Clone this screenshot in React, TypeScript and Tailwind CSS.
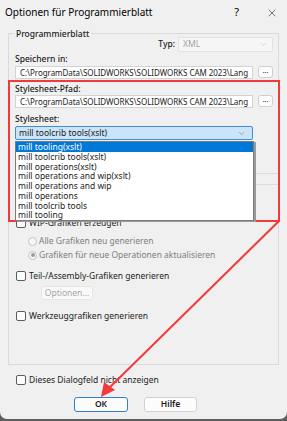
import { ChevronDown, X } from "lucide-react";

const stylesheets = [
	"mill tooling(xslt)",
	"mill toolcrib tools(xslt)",
	"mill operations(xslt)",
	"mill operations and wip(xslt)",
	"mill operations and wip",
	"mill operations",
	"mill toolcrib tools",
	"mill tooling",
];

const path = "C:\\ProgramData\\SOLIDWORKS\\SOLIDWORKS CAM 2023\\Lang";

function CheckRow({ label }: { label: string }) {
	return (
		<div className="flex h-[10px] items-center gap-[3px]">
			<span className="h-[10px] w-[10px] shrink-0 rounded-[2px] border border-[#5c5c5c] bg-[#fbfbfb]" />
			<span className="leading-[10px] text-[#1b1b1b]">{label}</span>
		</div>
	);
}

function RadioRow({ label, checked }: { label: string; checked?: boolean }) {
	return (
		<div className="flex h-[10px] items-center gap-[2px] pl-[12px]">
			<span className="flex h-[9px] w-[9px] shrink-0 items-center justify-center rounded-full border border-[#c4c4c4] bg-[#f7f7f7]">
				{checked && <span className="h-[4px] w-[4px] rounded-full bg-[#9b9b9b]" />}
			</span>
			<span className="leading-[10px] text-[#7d7d7d]">{label}</span>
		</div>
	);
}

function PathRow() {
	return (
		<div className="flex items-start gap-[5px]">
			<div className="flex h-[13px] w-[238px] items-center overflow-hidden whitespace-nowrap border border-[#d3d3d3] bg-white pl-[4px] text-[8px] leading-[10px] tracking-[-0.05px] text-[#1b1b1b]">
				{path}
			</div>
			<button className="flex h-[12px] w-[15px] items-center justify-center overflow-hidden rounded-[3px] border border-[#d0d0d0] bg-[#fdfdfd] pb-[3px] text-[7px] leading-[7px] text-[#1b1b1b]">
				...
			</button>
		</div>
	);
}

export default function App() {
	return (
		<div className="h-[421px] w-[287px] bg-[#5e5e5e] font-['Noto_Sans',sans-serif] text-[8.5px]">
			<div className="relative h-[419px] overflow-hidden rounded-b-[7px] bg-[#f0f0f0]">
				<header className="flex h-[25px] items-center justify-between pl-[5px] pr-[9px] text-[10px] text-black">
					<span>Optionen für Programmierblatt</span>
					<div className="flex items-center gap-[27px]">
						<span className="text-[11px]">?</span>
						<X size={12} strokeWidth={1} />
					</div>
				</header>

				<div className="px-[8px]">
					<section className="relative mt-[8px] border border-[#dadada] pb-[43px] pl-[6px] pr-[5px]">
						<span className="absolute -top-[6px] left-[5px] bg-[#f0f0f0] px-[2px] font-medium leading-[11px] text-[#1b1b1b]">
							Programmierblatt
						</span>

						<div className="mt-[3px] flex h-[15px] items-center justify-end gap-[3px]">
							<span className="font-medium text-[#1b1b1b]">Typ:</span>
							<div className="flex h-[15px] w-[95px] items-center justify-between rounded-[2px] border border-[#e2e2e2] bg-[#f6f6f6] pl-[4px] pr-[4px] text-[#a3a3a3]">
								<span>XML</span>
								<ChevronDown size={9} strokeWidth={1.3} className="text-[#b4b4b4]" />
							</div>
						</div>

						<div className="mt-[2px] h-[10px] font-medium leading-[10px] text-[#1b1b1b]">Speichern in:</div>
						<div className="mt-[2px]">
							<PathRow />
						</div>

						<div className="mt-[5px] h-[10px] font-medium leading-[10px] text-[#1b1b1b]">Stylesheet-Pfad:</div>
						<div className="mt-[1px]">
							<PathRow />
						</div>

						<div className="mt-[6px] h-[10px] font-medium leading-[10px] text-[#1b1b1b]">Stylesheet:</div>
						<div className="relative mt-[2px] w-[238px]">
							<div className="flex h-[14px] items-center justify-between rounded-[2px] border border-[#3d8fd8] bg-[#cce4f7] pl-[3px] pr-[6px] text-[#1b1b1b]">
								<span>mill toolcrib tools(xslt)</span>
								<ChevronDown size={9} strokeWidth={1.3} className="text-[#6b6b6b]" />
							</div>
							<ul className="absolute left-0 top-[15px] z-10 w-[239px] border border-[#7c7c7c] bg-white shadow-[2px_1px_0_#9a9a9a]">
								{stylesheets.map((item, i) => (
									<li
										key={item}
										className={`h-[9.75px] pl-[2px] leading-[9.75px] ${
											i === 0 ? "bg-[#0078d7] text-white" : "text-[#1b1b1b]"
										}`}
									>
										{item}
									</li>
								))}
							</ul>
						</div>

						<div className="-mr-[5px] ml-auto mt-[33px] h-[12px] w-[26px] border-y border-[#dcdcdc]" />

						<div className="mt-[33px] pl-[1px]">
							<CheckRow label="WIP-Grafiken erzeugen" />
							<div className="mt-[8px]">
								<RadioRow label="Alle Grafiken neu generieren" />
							</div>
							<div className="mt-[4px]">
								<RadioRow label="Grafiken für neue Operationen aktualisieren" checked />
							</div>
							<div className="mt-[11px]">
								<CheckRow label="Teil-/Assembly-Grafiken generieren" />
							</div>
							<button className="ml-[25px] mt-[5px] flex h-[14px] w-[52px] items-center justify-center rounded-[3px] border border-[#e6e6e6] bg-[#f9f9f9] text-[#a6a6a6]">
								Optionen...
							</button>
							<div className="mt-[11px]">
								<CheckRow label="Werkzeuggrafiken generieren" />
							</div>
						</div>
					</section>

					<div className="mt-[10px] pl-[8px]">
						<CheckRow label="Dieses Dialogfeld nicht anzeigen" />
					</div>

					<div className="mt-[12px] flex gap-[16px] pl-[66px]">
						<button className="h-[15px] w-[54px] rounded-[3px] border border-[#2f7fd0] bg-[#fcfcfc] font-semibold text-[#1b1b1b]">
							OK
						</button>
						<button className="h-[15px] w-[53px] rounded-[3px] border border-[#d2d2d2] bg-[#fcfcfc] font-semibold text-[#1b1b1b]">
							Hilfe
						</button>
					</div>
				</div>

				<div className="pointer-events-none absolute left-[8px] top-[80px] h-[142px] w-[272px] border-2 border-[#f2393b]" />

				<svg className="pointer-events-none absolute left-0 top-0" width="287" height="421" viewBox="0 0 287 421">
					<line x1="279" y1="221" x2="106" y2="391" stroke="#f2393b" strokeWidth="2" />
					<polygon points="101,397 104,382 115,390" fill="#f2393b" />
				</svg>
			</div>
		</div>
	);
}
